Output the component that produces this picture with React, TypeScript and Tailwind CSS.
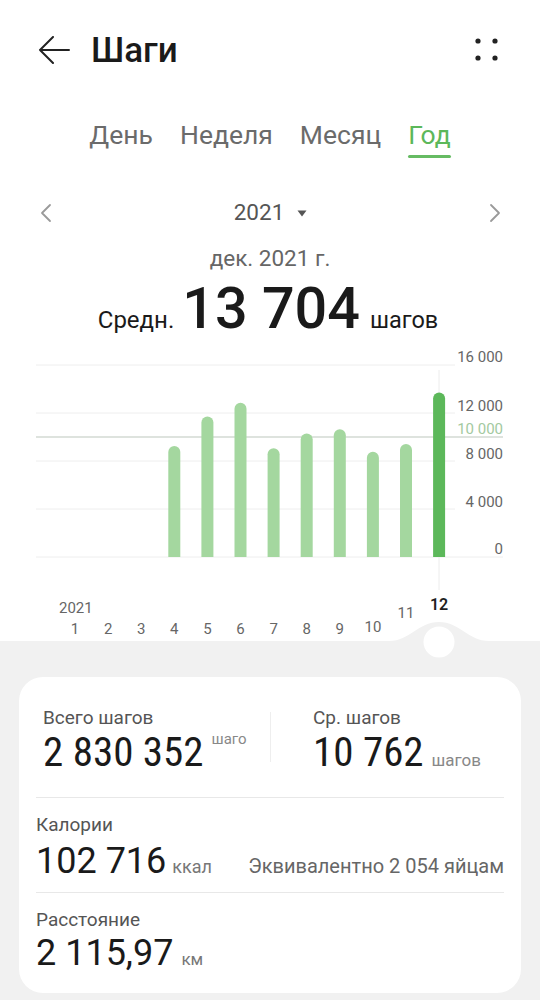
import React from 'react'

const steps = [0, 0, 0, 9250, 11700, 12850, 9060, 10300, 10650, 8780, 9420, 13704]
const zeroY = 217
const pxPerStep = 0.012
const firstX = 75
const colStep = 33.1

const gridLines = [
  { y: 25, label: '16 000', ly: 21.5, end: 455 },
  { y: 73, label: '12 000', ly: 70.5, end: 455 },
  { y: 121, label: '8 000', ly: 118.5, end: 455 },
  { y: 169, label: '4 000', ly: 166.5, end: 455 },
  { y: 217, label: '0', ly: 213.5, end: 503 },
]

// month labels bend upward near the selected column
const monthLabelY = [293.5, 293.5, 293.5, 293.5, 293.5, 293.5, 293.5, 293.5, 293.5, 292, 277.5, 269.5]

const narrow = "font-['Liberation_Sans_Narrow','Roboto_Condensed','DejaVu_Sans_Condensed',sans-serif]"

function StepsChart() {
  return (
    <svg width="540" height="301" viewBox="0 0 540 301" className="block">
      {gridLines.map((g) => (
        <g key={g.label}>
          <line x1="36" x2={g.end} y1={g.y} y2={g.y} stroke="#eeeeee" strokeWidth="1" />
          <text x="503" y={g.ly} textAnchor="end" fontSize="15" fill="#666" fontFamily="Roboto, sans-serif">
            {g.label}
          </text>
        </g>
      ))}
      <line x1="36" x2="503" y1="97" y2="97" stroke="#d3dad3" strokeWidth="1.5" />
      <text x="503" y="93.5" textAnchor="end" fontSize="15" fill="#a3c9a0" fontFamily="Roboto, sans-serif">
        10 000
      </text>

      <line x1="439" x2="439" y1="30" y2="250" stroke="#ececec" strokeWidth="1" />

      {steps.map((v, i) => {
        if (!v) return null
        const cx = firstX + colStep * i
        const x = cx - 6
        const top = zeroY - v * pxPerStep
        const selected = i === 11
        return (
          <path
            key={i}
            d={`M${x} ${zeroY} V${top + 6} A6 6 0 0 1 ${x + 12} ${top + 6} V${zeroY} Z`}
            fill={selected ? '#5cb85a' : '#a4d79f'}
          />
        )
      })}

      <text x="59" y="273" fontSize="15" fill="#666" fontFamily="Roboto, sans-serif">
        2021
      </text>
      {steps.map((_, i) => {
        const selected = i === 11
        return (
          <text
            key={i}
            x={firstX + colStep * i}
            y={monthLabelY[i]}
            textAnchor="middle"
            fontSize={selected ? 16 : 15}
            fontWeight={selected ? 600 : 400}
            fill={selected ? '#1f1f1f' : '#666'}
            fontFamily="Roboto, sans-serif"
          >
            {i + 1}
          </text>
        )
      })}
    </svg>
  )
}

function Chevron({ dir }: { dir: 'left' | 'right' }) {
  return (
    <svg width="12" height="20" viewBox="0 0 12 20">
      <polyline
        points={dir === 'left' ? '10,2 2,10 10,18' : '2,2 10,10 2,18'}
        fill="none"
        stroke="#9a9a9a"
        strokeWidth="1.8"
        strokeLinecap="round"
        strokeLinejoin="round"
      />
    </svg>
  )
}

export default function App() {
  return (
    <div className="w-[540px] min-h-[1000px] bg-white font-['Roboto',sans-serif] text-[#1a1a1a] flex flex-col">
      {/* header */}
      <div className="h-[100px] flex items-center pl-[38px] pr-[40px]">
        <svg width="32" height="28" viewBox="0 0 32 28">
          <path d="M31 14H2M15 1 2 14l13 13" fill="none" stroke="#222" strokeWidth="2" strokeLinecap="round" strokeLinejoin="round" />
        </svg>
        <h1 className="ml-[21px] text-[35px] leading-none font-medium">Шаги</h1>
        <svg width="26" height="26" viewBox="0 0 26 26" className="ml-auto">
          <circle cx="4" cy="4" r="2.6" fill="#222" />
          <circle cx="21" cy="4" r="2.6" fill="#222" />
          <circle cx="4" cy="21" r="2.6" fill="#222" />
          <circle cx="21" cy="21" r="2.6" fill="#222" />
        </svg>
      </div>

      {/* period tabs */}
      <div className="h-[75px] pt-[20px] flex justify-center gap-[27px] text-[26.5px] leading-[30px] text-[#6b6b6b]">
        <span>День</span>
        <span>Неделя</span>
        <span>Месяц</span>
        <span className="flex flex-col items-stretch text-[#5cb85a]">
          Год
          <span className="mt-[5px] h-[3px] rounded-full bg-[#66bb63]" />
        </span>
      </div>

      {/* year picker */}
      <div className="mt-[20px] h-[36px] flex items-center justify-between pl-[40px] pr-[39px]">
        <Chevron dir="left" />
        <div className="flex items-center text-[22.5px] text-[#555]">
          2021
          <svg width="10" height="7" viewBox="0 0 10 7" className="ml-[13px]">
            <path d="M0.5 0.5h9L5 6.5z" fill="#555" />
          </svg>
        </div>
        <Chevron dir="right" />
      </div>

      <div className="mt-[14px] text-center text-[22.5px] leading-[26px] text-[#666]">дек. 2021 г.</div>

      <div className="mt-[9px] h-[56px] flex items-baseline justify-center pr-[4px]">
        <span className="text-[24px] leading-none">Средн.</span>
        <span className="ml-[8px] mr-[10px] text-[57.5px] leading-none font-medium">13 704</span>
        <span className="text-[23.5px] leading-none">шагов</span>
      </div>

      <div className="mt-[4px]">
        <StepsChart />
      </div>

      {/* summary */}
      <div className="relative flex-1 bg-[#f1f1f1] pt-[36px] pb-[5px]">
        <svg width="100" height="40" viewBox="0 0 100 40" className="absolute left-[389px] top-[-20px]">
          <path d="M0 20C21 20 29 1 50 1S79 20 100 20V40H0Z" fill="#f1f1f1" />
          <circle cx="50" cy="21" r="15.5" fill="#fff" />
        </svg>

        <div className="mx-[19px] rounded-[24px] bg-white px-[17px]">
          <div className="flex pt-[30px] pb-[23px] border-b border-[#e8e8e8]">
            <div className="w-[234px] pl-[7px]">
              <div className="text-[19px] leading-[22px] text-[#555]">Всего шагов</div>
              <div className="mt-[3px] flex items-start">
                <span className={`${narrow} text-[41px] leading-[40px] font-normal`}>2 830 352</span>
                <span className="ml-[8px] -mt-[2px] text-[15px] leading-[18px] text-[#888]">шаго</span>
              </div>
            </div>
            <div className="mt-[5px] w-px h-[50px] bg-[#eeeeee]" />
            <div className="pl-[42px]">
              <div className="text-[19px] leading-[22px] text-[#555]">Ср. шагов</div>
              <div className="mt-[3px] flex items-baseline">
                <span className={`${narrow} text-[41px] leading-[40px] font-normal`}>10 762</span>
                <span className="ml-[8px] text-[17px] text-[#888]">шагов</span>
              </div>
            </div>
          </div>

          <div className="pt-[16px] pb-[10px] border-b border-[#e8e8e8]">
            <div className="text-[19px] leading-[22px] text-[#555]">Калории</div>
            <div className="mt-[4px] flex items-baseline">
              <span className="text-[36px] leading-[42px]">102 716</span>
              <span className="ml-[6px] text-[18px] text-[#777]">ккал</span>
              <span className="ml-auto text-[20px] text-[#666]">Эквивалентно 2 054 яйцам</span>
            </div>
          </div>

          <div className="pt-[16px] pb-[19px]">
            <div className="text-[19px] leading-[22px] text-[#555]">Расстояние</div>
            <div className="mt-[1px] flex items-baseline">
              <span className="text-[36px] leading-[42px]">2 115,97</span>
              <span className="ml-[8px] text-[17px] text-[#777]">км</span>
            </div>
          </div>
        </div>
      </div>
    </div>
  )
}
